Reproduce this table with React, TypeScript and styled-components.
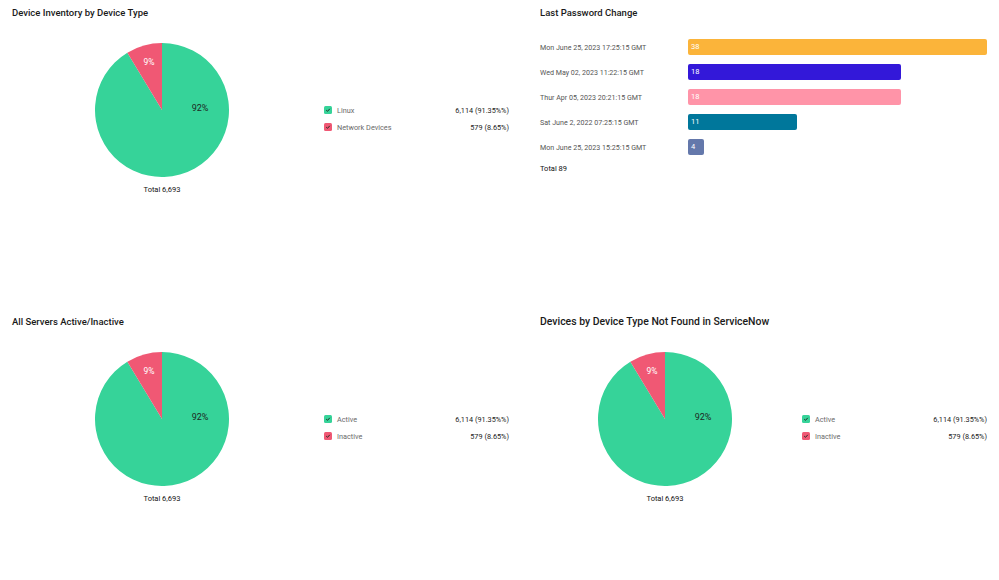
import styled, { createGlobalStyle } from 'styled-components';

const GlobalStyle = createGlobalStyle`
  html, body {
    margin: 0;
    padding: 0;
    background: #ffffff;
    font-family: Roboto, "Liberation Sans", sans-serif;
    color: #222222;
  }
`;

const Page = styled.div`
  width: 999px;
  height: 580px;
  display: grid;
  grid-template-columns: 521px 471px;
  grid-template-rows: 309px 271px;
  column-gap: 7px;
`;

const Panel = styled.section`
  padding: 7px 12px 0 12px;
  display: flex;
  flex-direction: column;
`;

const Title = styled.h2<{ $large?: boolean }>`
  margin: 0;
  font-size: ${(p) => (p.$large ? '10.45px' : '9.5px')};
  line-height: 12px;
  font-weight: 500;
  color: #1a1a1a;
`;

const PieBody = styled.div`
  display: flex;
  flex-direction: row;
  align-items: center;
  margin-top: 24px;
`;

const PieColumn = styled.div`
  flex: 1;
  display: flex;
  flex-direction: column;
  align-items: center;
`;

const Total = styled.div`
  margin-top: 8px;
  font-size: 7.5px;
  line-height: 9px;
  color: #111111;
`;

const Legend = styled.ul`
  list-style: none;
  margin: 0 0 0 12px;
  padding: 0;
  width: 185px;
  display: flex;
  flex-direction: column;
  gap: 8px;
`;

const LegendRow = styled.li`
  display: flex;
  align-items: center;
  height: 9px;
  font-size: 7.3px;
`;

const Check = styled.span<{ $color: string }>`
  width: 8px;
  height: 8px;
  border-radius: 1.5px;
  background: ${(p) => p.$color};
  display: flex;
  align-items: center;
  justify-content: center;
  margin-right: 5px;
`;

const LegendLabel = styled.span`
  flex: 1;
  color: #6a6a6a;
`;

const LegendValue = styled.span`
  color: #222222;
`;

const BarList = styled.div`
  display: flex;
  flex-direction: column;
  gap: 9px;
  margin-top: 20px;
`;

const BarRow = styled.div`
  display: flex;
  align-items: center;
  height: 16px;
`;

const BarLabel = styled.span`
  width: 148px;
  flex-shrink: 0;
  font-size: 7.1px;
  color: #555555;
`;

const BarTrack = styled.div`
  flex: 1;
  height: 16px;
`;

const Bar = styled.div<{ $color: string }>`
  height: 16px;
  border-radius: 2px;
  background: ${(p) => p.$color};
  color: #ffffff;
  font-size: 7.5px;
  line-height: 16px;
  padding-left: 3px;
  box-sizing: border-box;
`;

const BarTotal = styled.div`
  margin-top: 9px;
  font-size: 7.5px;
  color: #111111;
`;

const GREEN = '#36d399';
const RED = '#f05874';

type LegendItem = { label: string; value: string; color: string };

const CheckMark = () => (
  <svg width="6" height="6" viewBox="0 0 10 10">
    <path d="M2 5.2 L4.2 7.2 L8 3" fill="none" stroke="#1f2a24" strokeWidth="1.6" />
  </svg>
);

const Pie: React.FC = () => {
  const r = 67;
  const share = 0.0865;
  const a = share * Math.PI * 2;
  const x = r - r * Math.sin(a);
  const y = r - r * Math.cos(a);
  return (
    <svg width="134" height="134" viewBox="0 0 134 134">
      <path d={`M${r},${r} L${x},${y} A${r},${r} 0 1 0 ${r},0 Z`} fill={GREEN} />
      <path d={`M${r},${r} L${r},0 A${r},${r} 0 0 0 ${x},${y} Z`} fill={RED} />
      <text x="54" y="22" fontSize="8.5" fill="#ffffff" textAnchor="middle" fontFamily="Roboto, sans-serif">
        9%
      </text>
      <text x="105" y="68" fontSize="9" fill="#1d2a24" textAnchor="middle" fontFamily="Roboto, sans-serif">
        92%
      </text>
    </svg>
  );
};

const PieCard: React.FC<{ title: string; large?: boolean; items: LegendItem[] }> = ({
  title,
  large,
  items,
}) => (
  <Panel>
    <Title $large={large}>{title}</Title>
    <PieBody>
      <PieColumn>
        <Pie />
        <Total>Total 6,693</Total>
      </PieColumn>
      <Legend>
        {items.map((it) => (
          <LegendRow key={it.label}>
            <Check $color={it.color}>
              <CheckMark />
            </Check>
            <LegendLabel>{it.label}</LegendLabel>
            <LegendValue>{it.value}</LegendValue>
          </LegendRow>
        ))}
      </Legend>
    </PieBody>
  </Panel>
);

const passwordRows = [
  { label: 'Mon June 25, 2023 17:25:15 GMT', value: 38, width: 100, color: '#fbb43a' },
  { label: 'Wed May 02, 2023 11:22:15 GMT', value: 18, width: 71.2, color: '#3318d9' },
  { label: 'Thur Apr 05, 2023 20:21:15 GMT', value: 18, width: 71.2, color: '#ff94a8' },
  { label: 'Sat June 2, 2022 07:25:15 GMT', value: 11, width: 36.3, color: '#00779b' },
  { label: 'Mon June 25, 2023 15:25:15 GMT', value: 4, width: 5.4, color: '#6478ab' },
];

const App = () => (
  <>
    <GlobalStyle />
    <Page>
      <PieCard
        title="Device Inventory by Device Type"
        items={[
          { label: 'Linux', value: '6,114 (91.35%%)', color: GREEN },
          { label: 'Network Devices', value: '579 (8.65%)', color: RED },
        ]}
      />
      <Panel>
        <Title>Last Password Change</Title>
        <BarList>
          {passwordRows.map((row) => (
            <BarRow key={row.label}>
              <BarLabel>{row.label}</BarLabel>
              <BarTrack>
                <Bar $color={row.color} style={{ width: `${row.width}%` }}>
                  {row.value}
                </Bar>
              </BarTrack>
            </BarRow>
          ))}
        </BarList>
        <BarTotal>Total 89</BarTotal>
      </Panel>
      <PieCard
        title="All Servers Active/Inactive"
        items={[
          { label: 'Active', value: '6,114 (91.35%%)', color: GREEN },
          { label: 'Inactive', value: '579 (8.65%)', color: RED },
        ]}
      />
      <PieCard
        title="Devices by Device Type Not Found in ServiceNow"
        large
        items={[
          { label: 'Active', value: '6,114 (91.35%%)', color: GREEN },
          { label: 'Inactive', value: '579 (8.65%)', color: RED },
        ]}
      />
    </Page>
  </>
);

export default App;
